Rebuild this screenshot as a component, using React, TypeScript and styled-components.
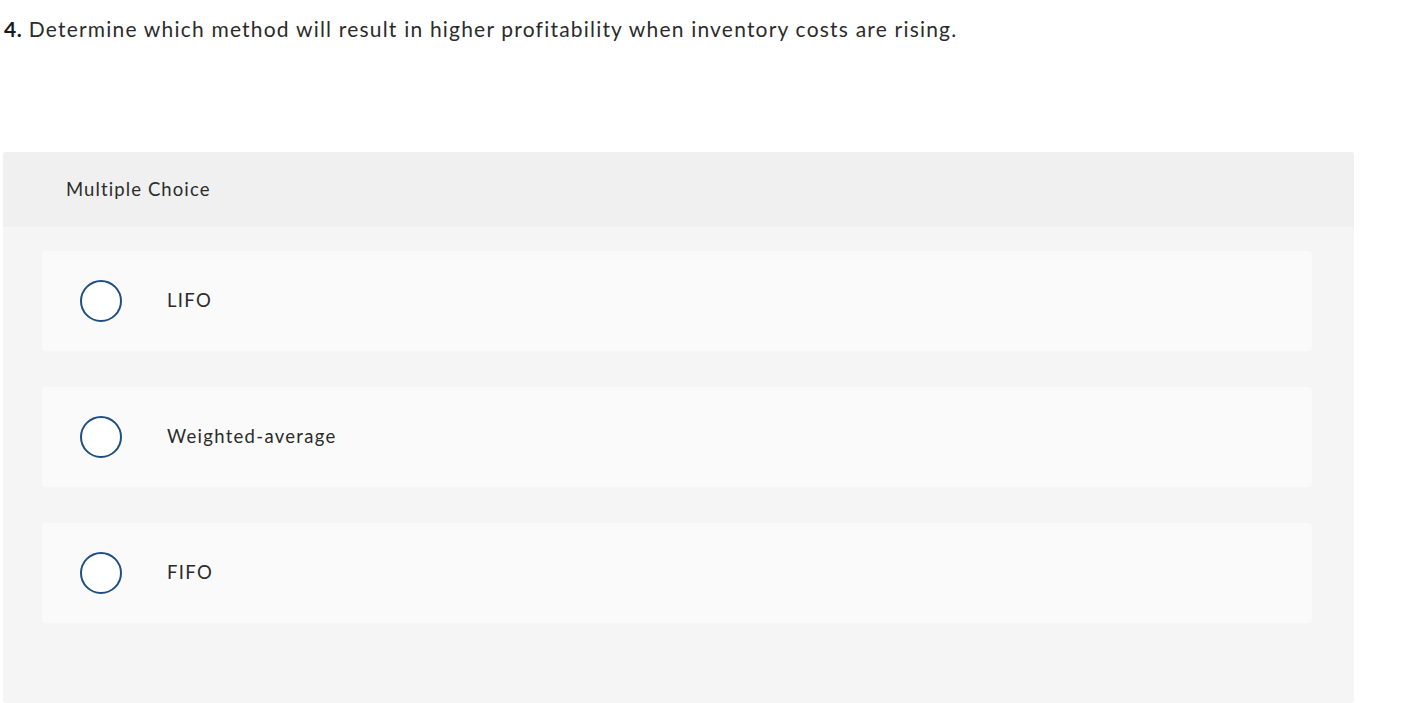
import React from 'react';
import styled, { createGlobalStyle } from 'styled-components';

const GlobalStyle = createGlobalStyle`
  html, body {
    margin: 0;
    padding: 0;
    background: #ffffff;
  }
  body {
    font-family: Lato, "Open Sans", sans-serif;
    color: #2b2b2b;
  }
`;

const Page = styled.div`
  padding: 0 63px 0 3px;
  width: 1351px;
`;

const Question = styled.p`
  margin: 0;
  padding: 15px 0 0 1px;
  height: 152px;
  box-sizing: border-box;
  font-size: 21px;
  line-height: 28px;
  letter-spacing: 1.2px;
  color: #2b2b2b;
  b {
    font-weight: 700;
    color: #1a1a1a;
    letter-spacing: 0.5px;
  }
`;

const Panel = styled.div`
  background: #f5f5f5;
  border-radius: 3px;
  overflow: hidden;
  height: 551px;
`;

const PanelHeader = styled.div`
  background: #f0f0f0;
  height: 75px;
  box-sizing: border-box;
  display: flex;
  align-items: center;
  padding: 0 0 1px 63px;
  font-size: 18.5px;
  letter-spacing: 1.1px;
  color: #2b2b2b;
`;

const Options = styled.div`
  display: flex;
  flex-direction: column;
  gap: 36px;
  padding: 24px 42px 0 39px;
`;

const Option = styled.label`
  display: flex;
  align-items: center;
  height: 100px;
  background: #fafafa;
  border-radius: 4px;
  padding-left: 38px;
  cursor: pointer;
`;

const Radio = styled.span`
  width: 38px;
  height: 38px;
  border: 2px solid #1f4f82;
  border-radius: 50%;
  background: #ffffff;
  flex-shrink: 0;
`;

const OptionText = styled.span`
  margin: 0 0 2px 45px;
  font-size: 18.5px;
  letter-spacing: 1.3px;
  color: #2b2b2b;
`;

const choices = ['LIFO', 'Weighted-average', 'FIFO'];

const App: React.FC = () => (
  <>
    <GlobalStyle />
    <Page>
      <Question>
        <b>4.</b> Determine which method will result in higher profitability when inventory costs are rising.
      </Question>
      <Panel>
        <PanelHeader>Multiple Choice</PanelHeader>
        <Options>
          {choices.map((c) => (
            <Option key={c}>
              <Radio />
              <OptionText>{c}</OptionText>
            </Option>
          ))}
        </Options>
      </Panel>
    </Page>
  </>
);

export default App;
